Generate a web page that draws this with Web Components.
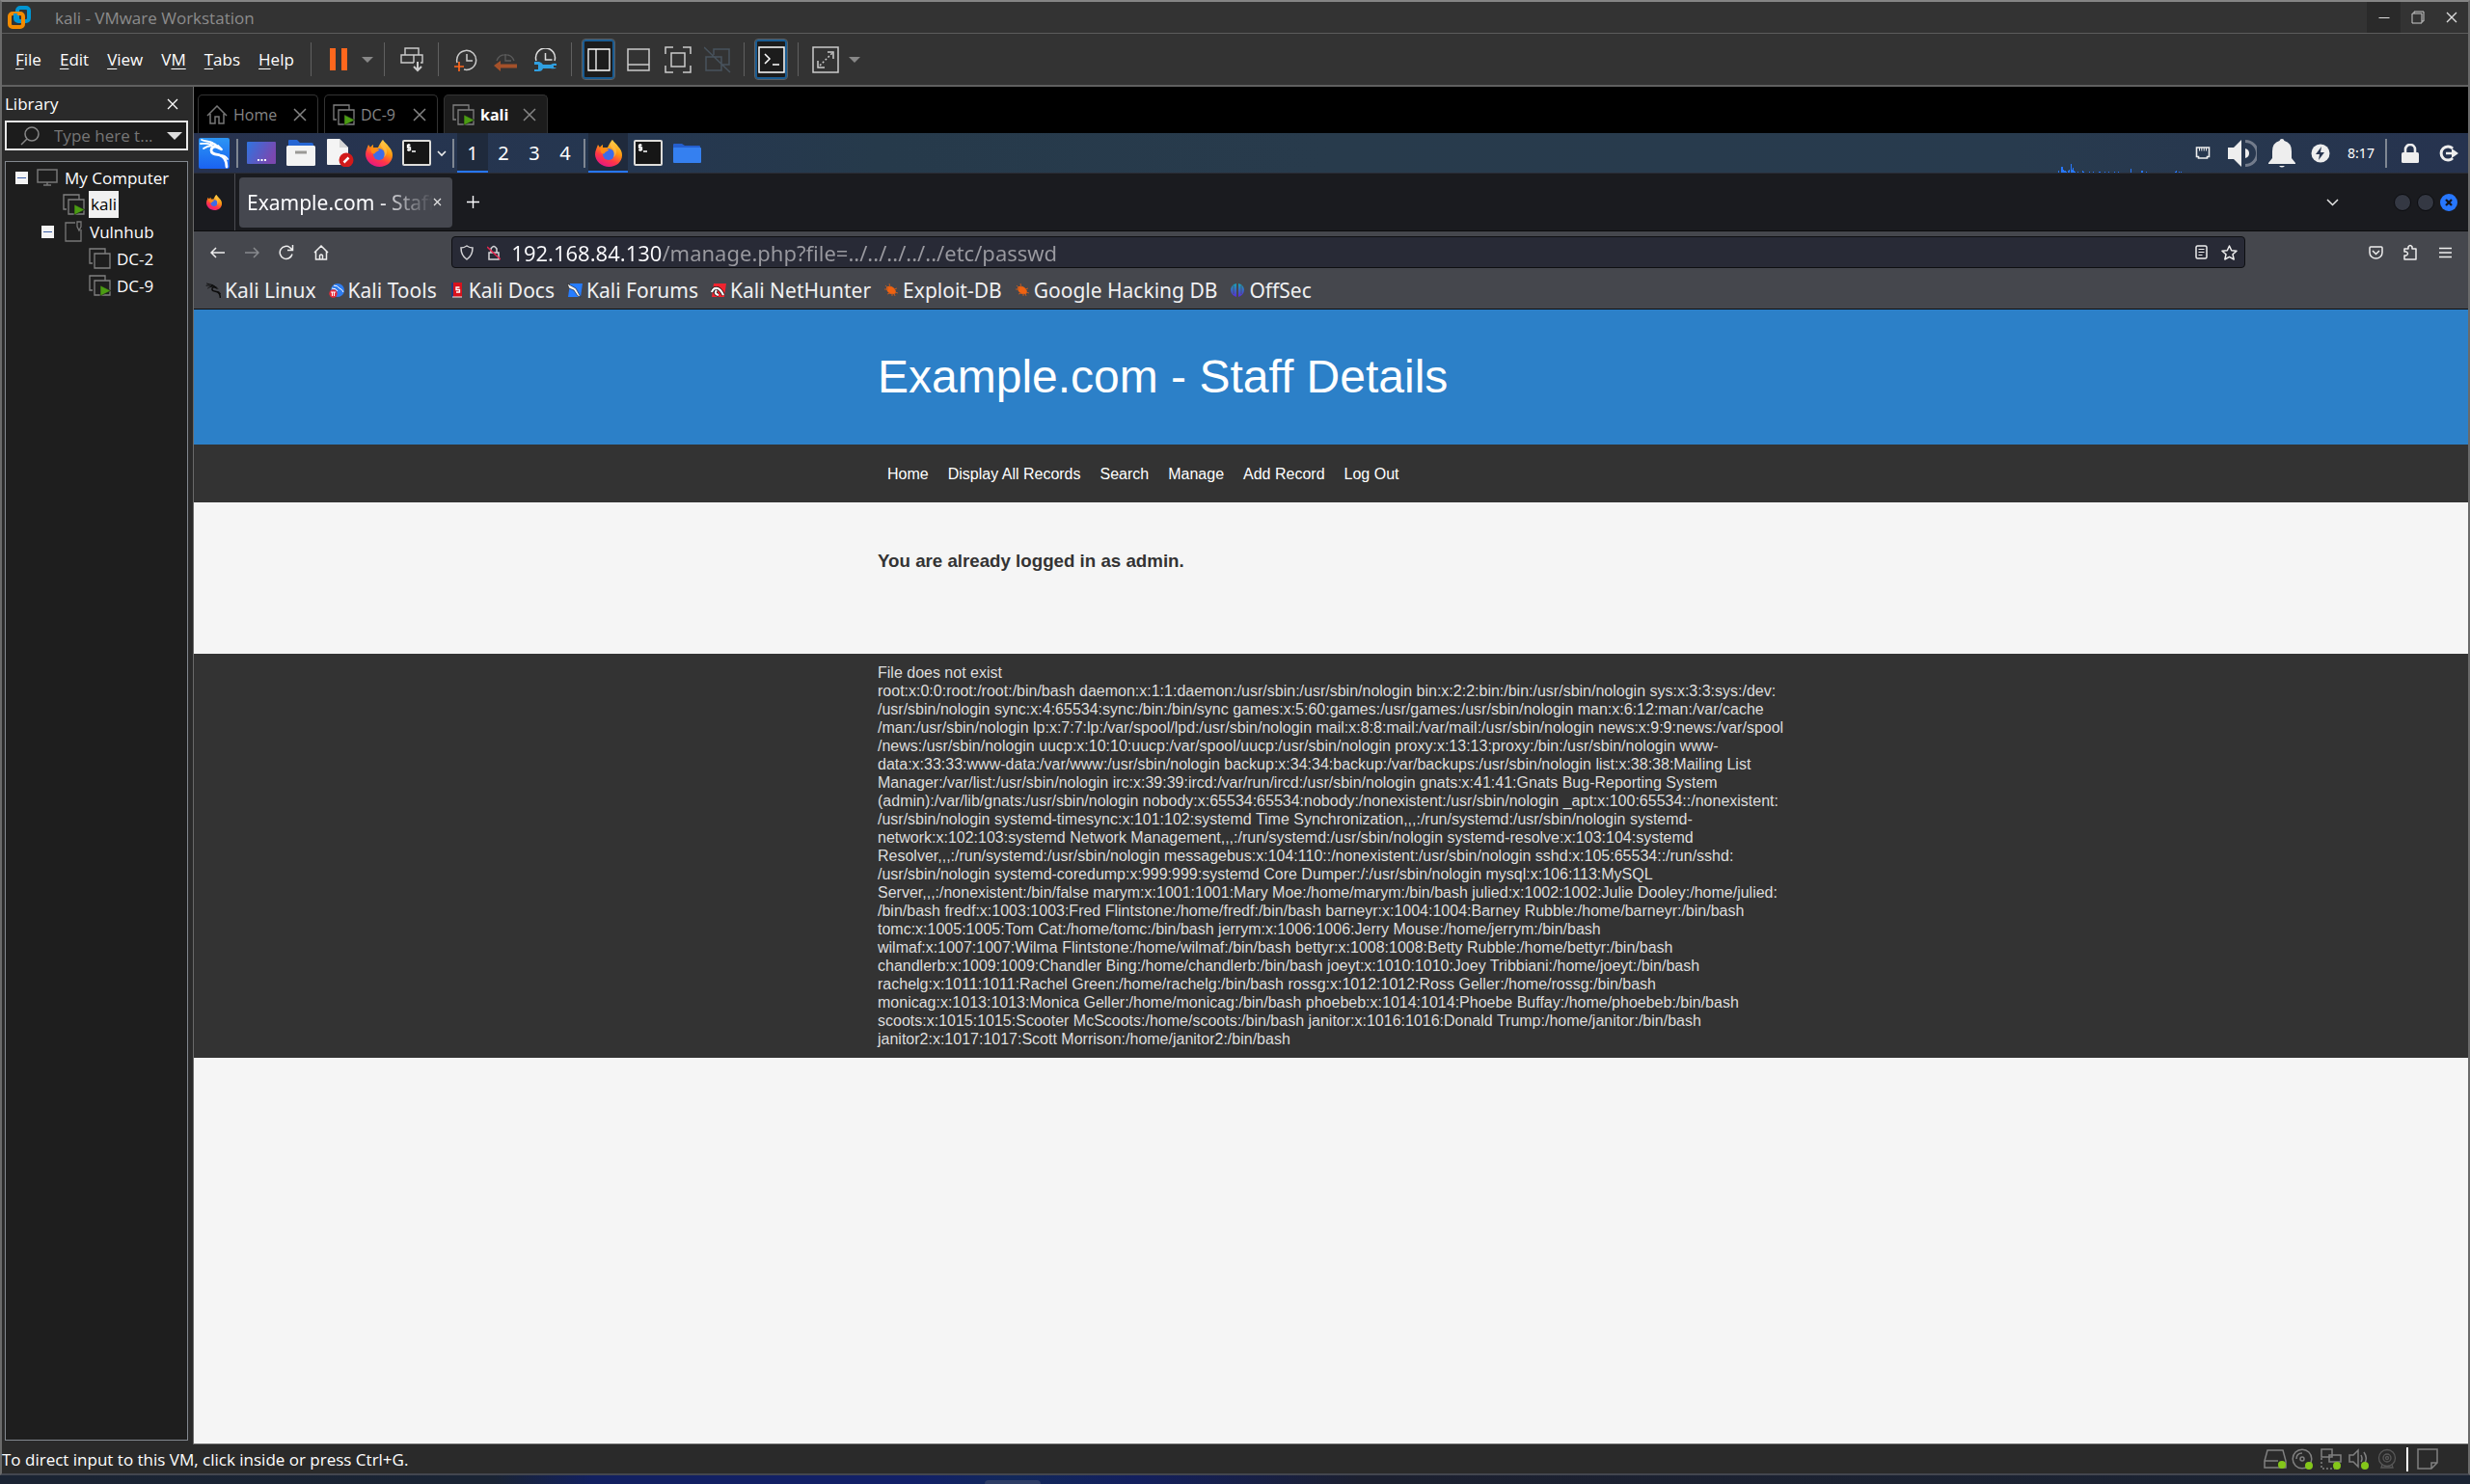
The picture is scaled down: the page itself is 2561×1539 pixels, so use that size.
<!DOCTYPE html>
<html lang="en">
<head>
<meta charset="utf-8">
<title>kali - VMware Workstation</title>
<style>
html, body { margin: 0; height: 100%; background: #2a2a2a; }
body { font-family: "Open Sans", "Noto Sans", sans-serif; font-size: 17px; color: #fff; }
</style>
</head>
<body>
<vm-window>
  <vm-titlebar slot="title">kali - VMware Workstation</vm-titlebar>
  <vm-toolbar slot="toolbar"></vm-toolbar>
  <vm-library slot="side"></vm-library>
  <vm-tabs slot="main"></vm-tabs>
  <kali-panel slot="main"></kali-panel>
  <ff-tabstrip slot="main">Example.com - Staff Details</ff-tabstrip>
  <ff-navbar slot="main"></ff-navbar>
  <ff-bookmarks slot="main"></ff-bookmarks>
  <staff-page slot="main"></staff-page>
  <vm-status slot="status">To direct input to this VM, click inside or press Ctrl+G.</vm-status>
</vm-window>

<script>
const fox = `<defs><linearGradient id="fa" x1=".8" y1="0" x2=".3" y2="1"><stop offset="0" stop-color="#ffe14d"/><stop offset=".4" stop-color="#ff980e"/><stop offset=".7" stop-color="#ff3647"/><stop offset="1" stop-color="#e31587"/></linearGradient></defs><path fill="url(#fa)" d="M18 0c2 3 4 4 6 7 3 3 4 6 4 9 0 7-6 12-13.500 12S0 22 0 15c0-4 2-7 3-10l2 3c1-2 2-2 3-3v3h5c2-4 3-6 5-8z"/><circle cx="14" cy="15" r="6" fill="#3d6be8"/><path fill="#ff8a16" d="M5 8c4-1 6 2 9 2 0 2-4 2-4 4-2 1-3 0-4-1z"/><path fill="#ffbd4f" d="M18 0c-3 4-3 6 0 9 2 3 2 6 1 9 3-2 4-6 2-10-1-2-3-4-3-8z" opacity=".7"/>`;
const dragon = c => `<g fill="none" stroke="${c}" stroke-linecap="round"><path stroke-width="1.800" d="M3 2c4 2 7 1 11 3M2 6c4 0 7-1 11 1M5 11c3-2 5-3 9-3"/><path stroke-width="2.800" d="M13 5c3 1 5 2 7 5-4-2-7 0-7 3 0 4 5 4 9 5 5 2 7 6 7 12"/><path stroke-width="1.800" d="M20 8l4 4M22 18c4 0 6 1 8 4"/></g>`;
const term = `<rect x="1" y="1" width="28" height="25" rx="1" fill="#161616" stroke="#deddda" stroke-width="2"/><path d="M8.500 5.500h-3v2.500h3v2.500h-3.500M6.900 4v8M10 12h4" fill="none" stroke="#fff" stroke-width="1.300"/>`;
const vmBox = `<path d="M17 6V1H1v15h3" /><path d="M6 6h16v15H6z"/>`;
const ICONS = {
  vmware: [24, 24, `<rect x="10" y="2" width="12" height="14" rx="3" fill="none" stroke="#0095d3" stroke-width="4"/><rect x="2" y="8" width="14" height="14" rx="3" fill="none" stroke="#f38b00" stroke-width="4"/><path d="M8 8v5a3 3 0 0 0 3 3h3" fill="none" stroke="#0095d3" stroke-width="4"/>`],
  min: [12, 12, `<path d="M.5 6.500h11" stroke="#ddd"/>`],
  restore: [14, 14, `<path d="M1 3h10v10H1zM3 3V1h10v10h-2" fill="none" stroke="#ccc"/>`],
  x: [12, 12, `<path d="M1 1l10 10M11 1L1 11" stroke="currentColor" stroke-width="1.300"/>`],
  xbig: [14, 14, `<path d="M1 1l12 12M13 1L1 13" stroke="currentColor" stroke-width="1.500"/>`],
  pause: [18, 23, `<path d="M0 0h6v23H0zM12 0h6v23h-6z" fill="#ff671d"/>`],
  caret: [12, 6, `<path d="M0 0h12L6 6z" fill="#888"/>`],
  caretw: [16, 8, `<path d="M0 0h16L8 8z" fill="#ddd"/>`],
  send: [24, 26, `<g fill="none" stroke="#ccc" stroke-width="1.400"><path d="M5 8V1h14v7M14 16H1V8h22v8h-2M14 8v8"/><path d="M18 15v9M14 20l4 4 4-4" stroke-width="2"/></g>`],
  snap: [24, 24, `<g fill="none" stroke="#ccc" stroke-width="1.500"><path d="M3 15A10 10 0 1 1 10 22M13 6v7h6"/><path d="M5 14v10M0 19h10" stroke="#ff671d" stroke-width="1.700"/></g>`],
  revert: [24, 24, `<path d="M3 13A9.500 9.500 0 0 1 21 13M12 6v7h6" fill="none" stroke="#5c5c5c" stroke-width="1.300"/><path d="M0 18l7-5v3.500h17v4H7V24z" fill="#a4512a"/>`],
  manage: [24, 24, `<path d="M3 13A10 10 0 1 1 22 13M12.500 5v7h7" fill="none" stroke="#ddd" stroke-width="1.500"/><path d="M1 14h5q3 1 4 3h8q3-2 6-1v2h-3v2h3q-2 2-6 1h-8q-1 3-4 3H1v-2h4v-5H1z" fill="#2f9fe0"/>`],
  side: [24, 24, `<path d="M1 1h22v22H1zM9 1v22" fill="none" stroke="#fff" stroke-width="1.300"/>`],
  thumb: [24, 24, `<path d="M1 1h22v22H1zM1 17h22" fill="none" stroke="#ccc" stroke-width="1.500"/>`],
  full: [28, 28, `<path d="M1 8V1h8M19 1h8v7M27 20v7h-8M9 27H1v-7M7 7h14v14H7z" fill="none" stroke="#ccc" stroke-width="1.500"/>`],
  unity: [28, 28, `<path d="M0 1l27 26M10 9V3h16v16h-7M2 11h16v14H2z" fill="none" stroke="#48535d" stroke-width="1.500"/>`],
  console: [28, 28, `<path d="M1 1h26v26H1zM7 8l5 5-5 5M15 19h7" fill="none" stroke="#fff" stroke-width="1.500"/>`],
  expand: [28, 28, `<path d="M1 1h26v26H1zM16 6h6v7M6 15v7h7" fill="none" stroke="#ccc" stroke-width="1.500"/><path d="M8 20L21 7" stroke="#ccc" stroke-width="1.500" stroke-dasharray="2 2"/>`],
  home: [22, 20, `<path d="M1 11L11 1l10 10M4 9v10h5v-7h4v7h5V9" fill="none" stroke="#777" stroke-width="1.500"/>`],
  vm: [23, 22, `<g fill="none" stroke="#808080" stroke-width="1.300">${vmBox}</g>`],
  vmrun: [23, 22, `<g fill="none" stroke="#808080" stroke-width="1.300">${vmBox}</g><path d="M12 11v11l11-5.500z" fill="#4b9c12" stroke="#1c1c1c" stroke-width=".6"/>`],
  monitor: [24, 18, `<path d="M3 1h20v13H3zM9 17h8M13 14v3" fill="none" stroke="#777" stroke-width="1.500"/>`],
  folder: [23, 22, `<path d="M15 2H5v19h16V9M17 1h4v5l-2 4-2-4z" fill="none" stroke="#777" stroke-width="1.300"/>`],
  search: [20, 20, `<g fill="none" stroke="#888" stroke-width="1.500"><circle cx="12" cy="8" r="7"/><path d="M7 13l-6 6"/></g>`],
  logo: [36, 36, `<defs><linearGradient id="kl" x2="0" y2="1"><stop stop-color="#2b95f5"/><stop offset="1" stop-color="#1a62f0"/></linearGradient></defs><rect x="2" y="2" width="32" height="32" rx="2" fill="url(#kl)"/><g transform="translate(2 2)">${dragon('#fff')}</g>`],
  desk: [30, 23, `<defs><linearGradient id="dg" x2="1" y2=".4"><stop stop-color="#2f74e0"/><stop offset="1" stop-color="#7a48b0"/></linearGradient></defs><rect width="30" height="23" rx="1" fill="url(#dg)"/><path d="M11 19h2M14.500 19h2M18 19h2" stroke="#fff" stroke-width="2"/>`],
  files: [30, 28, `<path d="M2 1q0-1 1-1h8l3 3h12q2 0 2 2v5H2z" fill="#2666d4"/><rect y="6" width="30" height="21" rx="1.500" fill="#f3f3f3"/><path d="M9 13h12" stroke="#9a9996" stroke-width="3"/>`],
  doc: [28, 29, `<path d="M0 1q0-1 1-1h12l9 9v18H1q-1 0-1-1z" fill="#f4f4f4"/><path d="M13 0v9h9z" fill="#d5d5d5"/><circle cx="20" cy="22" r="7.500" fill="#d21a1a"/><path d="M17.500 24.500l5-5" stroke="#fff" stroke-width="2.500"/>`],
  fox: [28, 28, fox],
  term: [30, 27, term],
  chev: [12, 8, `<path d="M2 2l4 4 4-4" fill="none" stroke="#eee" stroke-width="1.600"/>`],
  kfolder: [29, 20, `<path d="M0 1q0-1 1-1h8l3 2h15q1 0 1 1v3H0z" fill="#255fce"/><rect y="4" width="29" height="16" rx="1" fill="#3580f0"/>`],
  eth: [16, 13, `<path d="M1.500 1h13v9.500h-2v1.500h-9v-1.500h-2z" fill="none" stroke="#eee" stroke-width="1.600"/><path d="M4.500 1v3.500M6.800 1v3.500M9.200 1v3.500M11.500 1v3.500" stroke="#eee"/>`],
  vol: [30, 28, `<path d="M0 8h6l8-8v28l-8-8H0z" fill="#eee"/><path d="M18 9q4 1 4 5t-4 5z" fill="#eee"/><path d="M18 1.500a12.500 12.500 0 0 1 0 25" fill="none" stroke="#737c8c" stroke-width="3"/>`],
  bell: [28, 30, `<path d="M14 0q2 0 2.500 2Q24 4 24 13v7l4 5v1H0v-1l4-5v-7Q4 4 11.500 2 12 0 14 0zM11 28h6q-3 3-6 0z" fill="#eee"/>`],
  power: [20, 20, `<circle cx="10" cy="10" r="9.500" fill="#eee"/><path d="M11 3l-6 8h4l-1 6 6-8h-4z" fill="#293650"/>`],
  lock: [18, 20, `<path d="M4 9V6a5 5 0 0 1 10 0v3" fill="none" stroke="#eee" stroke-width="2.600"/><rect y="9" width="18" height="11" rx="1.500" fill="#eee"/>`],
  logout: [20, 18, `<path d="M14 4a7 7 0 1 0 0 10" fill="none" stroke="#eee" stroke-width="3"/><path d="M7 9h8" stroke="#eee" stroke-width="2.500"/><path d="M13 4l7 5-7 5z" fill="#eee"/>`],
  plus: [13, 13, `<path d="M6.500 0v13M0 6.500h13" stroke="#fbfbfe" stroke-width="1.400"/>`],
  tx: [9, 9, `<path d="M1 1l7 7M8 1L1 8" stroke="#e5e5e5" stroke-width="1.200"/>`],
  down: [13, 8, `<path d="M1 1l5.500 5.500L12 1" fill="none" stroke="#e5e5e5" stroke-width="1.500"/>`],
  dot: [18, 18, `<circle cx="9" cy="9" r="8.500" fill="#343843" stroke="#0c0d10"/>`],
  close: [18, 18, `<circle cx="9" cy="9" r="9" fill="#2777ff"/><path d="M6 6l6 6M12 6l-6 6" stroke="#14161c" stroke-width="2.300"/>`],
  back: [15, 12, `<path d="M15 6H1M6 1L1 6l5 5" fill="none" stroke="#eee" stroke-width="1.500"/>`],
  fwd: [15, 12, `<path d="M0 6h14M9 1l5 5-5 5" fill="none" stroke="#888a8e" stroke-width="1.500"/>`],
  reload: [16, 16, `<path d="M14 9.500A6.500 6.500 0 1 1 12 3l2 2M14.500 0v5.500H9" fill="none" stroke="#eee" stroke-width="1.500"/>`],
  fhome: [16, 16, `<path d="M1 8l7-7 7 7M2.500 7v8h11V7M6.500 15v-4q1.500-2 3 0v4" fill="none" stroke="#eee" stroke-width="1.500"/>`],
  shield: [14, 16, `<path d="M7 1q3 2 6 2 0 8-6 12Q1 11 1 3q3 0 6-2z" fill="none" stroke="#d5d5d8" stroke-width="1.500"/>`],
  nolock: [14, 16, `<path d="M4 8V4q3-5 6 0v4M2 8h10v7H2z" fill="none" stroke="#d5d5d8" stroke-width="1.500"/><path d="M0 2l14 13" stroke="#e22850" stroke-width="1.600"/>`],
  reader: [13, 15, `<rect x="1" y="1" width="11" height="13" rx="1.500" fill="none" stroke="#eee" stroke-width="1.500"/><path d="M3.500 4.500h6M3.500 7.500h6M3.500 10.500h4" stroke="#eee" stroke-width="1.200"/>`],
  star: [17, 16, `<path d="M8.500 1l2.200 4.700 5.300.6-4 3.500 1.200 5.200-4.700-2.700L3.800 15 5 9.800 1 6.300l5.300-.6z" fill="none" stroke="#eee" stroke-width="1.500" stroke-linejoin="round"/>`],
  pocket: [15, 14, `<path d="M1 2q0-1 1-1h11q1 0 1 1v5a6.500 6 0 0 1-13 0zM4 5l3.500 3.500L11 5" fill="none" stroke="#eee" stroke-width="1.500"/>`],
  puzzle: [14, 17, `<path d="M1 5h4V3q2-3 4 0v2h4v11H1v-4h2q3-2 0-4H1z" fill="none" stroke="#eee" stroke-width="1.500" stroke-linejoin="round"/>`],
  menu: [13, 12, `<path d="M0 1.500h13M0 6h13M0 10.500h13" stroke="#eee" stroke-width="1.500"/>`],
  bkali: [16, 16, `<g transform="scale(.53)">${dragon('#0c0c0c')}</g>`],
  btools: [16, 16, `<circle cx="9" cy="8" r="7" fill="#2f7df0"/><path d="M5 3q4 0 6 3 3 1 4 4M3 6q5 0 6 3" fill="none" stroke="#fff"/><circle cx="4.500" cy="11.500" r="4.200" fill="#e62d3a"/><path d="M2 10h5M3.500 10v4M5.500 10v4" stroke="#fff"/>`],
  bdocs: [16, 16, `<path d="M2 0h3v15H2z" fill="#243a78"/><path d="M4 0h9v15H4z" fill="#d8121c"/><path d="M10.500 5H7v2.500h3.500V10H7" fill="none" stroke="#fff" stroke-width="1.300"/><path d="M3 15h10" stroke="#eee"/>`],
  bforum: [16, 16, `<path d="M3 1h13l-2 14H1z" fill="#277dff"/><path d="M0 1l9 5 5 9-3-1-4-6-5-2z" fill="#f5f5f5" stroke="#111" stroke-width=".6"/>`],
  bhunter: [16, 16, `<path d="M3 1h13l-2 14H1z" fill="#f0242f"/><path d="M1 10c2-6 8-6 12 3M6 8q-3 4 2 5" fill="none" stroke="#111" stroke-width="3.600"/><path d="M1 10c2-6 8-6 12 3M6 8q-3 4 2 5" fill="none" stroke="#fff" stroke-width="2.200"/>`],
  bexploit: [16, 16, `<ellipse cx="8" cy="8" rx="5.500" ry="3.600" fill="#ee6211" transform="rotate(35 8 8)"/><path d="M2 3l3 3M6 1l1 4M1 7h4M4 12l3-1M9 14v-3M14 6l-3 1M15 11l-3-1M12 14l-1-3" stroke="#b85a24"/>`],
  boff: [16, 16, `<defs><linearGradient id="og" x2="0" y2="1"><stop stop-color="#18a5b8"/><stop offset="1" stop-color="#5b2bd5"/></linearGradient></defs><path d="M7 1v14Q1 13 1 7q1-5 6-6zM9 1q5 1 6 6 0 6-6 8z" fill="url(#og)"/><path d="M4 3v9M12 3v9" stroke="#45474d" stroke-width=".7"/>`],
  disk: [24, 22, `<path d="M1 20V13L4 2h16l3 11v7zM1 13h14" fill="none" stroke="#808080" stroke-width="1.500"/><circle cx="19" cy="17" r="4" fill="#84c61a"/>`],
  cd: [24, 22, `<g fill="none" stroke="#808080" stroke-width="1.500"><circle cx="11" cy="11" r="9.800"/><circle cx="11" cy="11" r="2"/><path d="M5 11q0-6 6-6"/></g><circle cx="18" cy="18" r="4" fill="#84c61a"/>`],
  net: [24, 22, `<g fill="none" stroke="#808080" stroke-width="1.500"><path d="M2 1h11v8H2zM10 7h12v7H10z"/><path d="M2 10v11h14" stroke-dasharray="2 2"/></g><circle cx="18" cy="18" r="4" fill="#84c61a"/>`],
  snd: [24, 22, `<path d="M2 7h4l5-5v17l-5-5H2zM14 7q2 4 0 7M17 4q4 6 1 11" fill="none" stroke="#808080" stroke-width="1.500"/><circle cx="18" cy="18" r="4" fill="#84c61a"/>`],
  cam: [24, 22, `<g fill="none" stroke="#585858" stroke-width="1.300"><circle cx="12" cy="10" r="8.500"/><circle cx="12" cy="10" r="4"/><circle cx="12" cy="10" r="1.500"/><path d="M7 17l-1 3h12l-1-3"/></g>`],
  note: [22, 22, `<path d="M1 1h20v14l-6 6H1zM15 21v-6h6" fill="none" stroke="#808080" stroke-width="1.500"/>`],
};
const I = n => `<ui-icon name="${n}"></ui-icon>`;

function define(name, css, html) {
  const t = document.createElement('template');
  t.innerHTML = `<style>:host,*{box-sizing:border-box}button{font:inherit;color:inherit;background:none;border:0;padding:0;margin:0;display:flex;align-items:center;justify-content:center}a{color:inherit;text-decoration:none}${css}</style>${html}`;
  customElements.define(name, class extends HTMLElement {
    constructor() {
      super();
      this.attachShadow({ mode: 'open' }).append(t.content.cloneNode(true));
    }
  });
}

customElements.define('ui-icon', class extends HTMLElement {
  constructor() { super(); this.attachShadow({ mode: 'open' }); }
  connectedCallback() {
    const [w, h, body] = ICONS[this.getAttribute('name')];
    const s = this.getAttribute('size') || w;
    this.shadowRoot.innerHTML = `<style>:host{display:inline-flex;flex:none}svg{display:block}</style><svg width="${s}" height="${s * h / w}" viewBox="0 0 ${w} ${h}" aria-hidden="true">${body}</svg>`;
  }
});

define('vm-window', `
:host{display:flex;flex-direction:column;min-height:100vh;background:#2a2a2a}
.frame{flex:1;display:flex;flex-direction:column;border:2px solid #6a6a6a;border-top-color:#858585;border-bottom-color:#43464f}
.body{flex:1;display:flex}
aside{flex:none;width:199px;display:flex;border-right:1px solid #6a6a6a}
main{flex:1;min-width:0;display:flex;flex-direction:column;border-bottom:1px solid #6a6a6a}
.desk{height:9px;display:flex;justify-content:center;background:linear-gradient(90deg,#1b2433,#1a2434 20%,#122060 24%,#122068 37%,#12285a 41%,#131f5e 46%,#1c2030 55%,#1b2433);padding-top:5px}
.desk i{width:58px;height:4px;background:#2e3d66;border-radius:4px 4px 0 0;margin-right:18%}
::slotted([slot=side]){flex:1;min-width:0}
`, `<div class="frame"><slot name="title"></slot><slot name="toolbar"></slot>
<div class="body"><aside><slot name="side"></slot></aside><main><slot name="main"></slot></main></div>
<slot name="status"></slot></div><div class="desk"><i></i></div>`);

define('vm-titlebar', `
:host{display:flex;align-items:center;height:33px;background:#333;color:#8c8c8c;border-bottom:1px solid #5c5c5c;padding-left:6px;font-size:17px}
span{flex:1;padding-left:25px}
button{width:35px;height:32px;color:#ddd}
.on{background:#2a2a2a}
`, `${I('vmware')}<span><slot></slot></span><button class="on" aria-label="Minimize">${I('min')}</button><button aria-label="Restore">${I('restore')}</button><button aria-label="Close">${I('x')}</button>`);

define('vm-toolbar', `
:host{display:flex;align-items:center;height:55px;background:#333;border-bottom:2px solid #606060;font-size:17px}
nav{width:313px;display:flex;gap:19px;padding-left:14px}
u{text-underline-offset:3px;text-decoration-thickness:1px;text-decoration-skip-ink:none}
.b{width:41px;height:41px;flex:none}
.c{width:20px;flex:none}
.s{width:15px;height:35px;flex:none;display:flex;justify-content:center}
.s::before{content:"";width:1px;background:#606060}
.on{width:33px;margin:0 4px;background:#1c1c1c;border:2px solid #1a5c92;outline:1px solid #5a5f64;border-radius:3px}
`, `<nav><button><span><u>F</u>ile</span></button><button><span><u>E</u>dit</span></button><button><span><u>V</u>iew</span></button><button><span>V<u>M</u></span></button><button><span><u>T</u>abs</span></button><button><span><u>H</u>elp</span></button></nav>
<i class="s"></i><button class="b" aria-label="Suspend">${I('pause')}</button><button class="c" aria-label="Power options">${I('caret')}</button><i class="s"></i>
<button class="b" aria-label="Send Ctrl+Alt+Del">${I('send')}</button><i class="s"></i>
<button class="b" aria-label="Take snapshot">${I('snap')}</button><button class="b" aria-label="Revert snapshot">${I('revert')}</button><button class="b" aria-label="Manage snapshots">${I('manage')}</button><i class="s"></i>
<button class="b on" aria-label="Show library">${I('side')}</button><button class="b" aria-label="Thumbnail bar">${I('thumb')}</button><button class="b" aria-label="Full screen">${I('full')}</button><button class="b" aria-label="Unity">${I('unity')}</button><i class="s"></i>
<button class="b on" aria-label="Console view">${I('console')}</button><i class="s"></i>
<button class="b" aria-label="Stretch">${I('expand')}</button><button class="c" aria-label="Stretch options">${I('caret')}</button>`);

define('vm-library', `
:host{display:flex;flex-direction:column;background:#2a2a2a;padding:0 5px 4px 3px;font-size:17px}
header{display:flex;align-items:center;justify-content:space-between;height:35px;padding:0 10px 0 0}
.q{display:flex;align-items:center;height:31px;border:2px solid #e8e8e8;background:#1c1c1c;padding:0 4px 0 14px}
input{flex:1;min-width:0;background:none;border:0;outline:0;font:inherit;padding:0 0 0 15px;color:#fff}
input::placeholder{color:#767676;opacity:1}
ul{list-style:none;margin:0;padding:0}
.tree{flex:1;margin-top:11px;border:1px solid #83888f;background:#1e1e1e;padding:2px 0 0 10px}
li>div{display:flex;align-items:center;height:28px;gap:7px}
li>ul{padding-left:27px}
li>.leaf{padding-left:22px;gap:4px}
.leaf span{padding:0 2px}
.box{width:13px;height:13px;background:#f4f4f4;flex:none}
.box::before{content:"";width:9px;height:1px;background:#3b5ea8}
b{font-weight:400;background:#f0f0f0;color:#000;padding:0 2px;line-height:28px}
`, `<header><span>Library</span><button aria-label="Close library">${I('x')}</button></header>
<div class="q">${I('search')}<input type="text" aria-label="Search library" placeholder="Type here t..."><button aria-label="Search options">${I('caretw')}</button></div>
<ul class="tree"><li><div><button class="box" aria-label="Collapse"></button>${I('monitor')}<span>My Computer</span></div>
<ul><li><div class="leaf">${I('vmrun')}<b>kali</b></div></li>
<li><div><button class="box" aria-label="Collapse"></button>${I('folder')}<span>Vulnhub</span></div>
<ul><li><div class="leaf">${I('vm')}<span>DC-2</span></div></li><li><div class="leaf">${I('vmrun')}<span>DC-9</span></div></li></ul></li></ul></li></ul>`);

define('vm-tabs', `
:host{display:flex;align-items:flex-end;gap:6px;height:48px;background:#000;padding-left:4px;font-size:16px;color:#858585}
.t{display:flex;align-items:center;height:40px;padding:0 11px 0 8px;border:1px solid #333;border-bottom:0;border-radius:5px 5px 0 0;width:118px}
.t span{flex:1;padding-left:6px}
.home{width:125px}.on{width:108px;background:#1c1c1c;color:#fff;font-weight:700}
button{color:#858585}
`, `<div class="t home">${I('home')}<span>Home</span><button aria-label="Close Home">${I('xbig')}</button></div>
<div class="t">${I('vmrun')}<span>DC-9</span><button aria-label="Close DC-9">${I('xbig')}</button></div>
<div class="t on">${I('vmrun')}<span>kali</span><button aria-label="Close kali">${I('xbig')}</button></div>`);

const bars = [6,0,0,18,18,8,4,4,3,0,4,8,0,27,9,15,4,3,0,0,3,0,0,0,0,6,3,0,0,0,0,0,3,0,0,0,3,0,0,0,0,0,3,3,0,0,0,0,3,0,0,0,3,0,0,0,0,0,3,0,0,0,3,0,0,0,0,0,0,0,0,0,0,0,0,12,0,0,0,0,0,0,0,0,0,0,6,4,0,0,0,3,0,0,0,0,0,0,0,0,0,0,0,0,0,0,0,0,0,0,0,0,0,0,0,0,0,0,0,0,0,3,6,0,0,3,0,3];
define('kali-panel', `
:host{display:flex;align-items:center;height:41px;background:linear-gradient(90deg,#27324f,#253750 20%,#263a4b 30%,#283b4c 50%,#283b4e 80%,#26334f);font-family:"Noto Sans",sans-serif;font-size:20px}
button{width:41px;height:41px;flex:none}
.w40{width:40px}.w37{width:37px}.w16{width:16px}.n{width:32px}
.s{width:8px;height:30px;flex:none;display:flex;justify-content:center}
.s::before{content:"";width:2px;background:#7f8792}
.on{background:#1f2a3c;box-shadow:inset 0 -2px #2777ff}
.gap{flex:1}
.g{display:flex;align-items:flex-end;height:41px;width:129px}
time{font-size:14px;width:44px;text-align:center}
`, `<button aria-label="Applications">${I('logo')}</button><i class="s"></i>
<button aria-label="Show desktop">${I('desk')}</button><button aria-label="Files">${I('files')}</button><button aria-label="Text editor">${I('doc')}</button><button class="w40" aria-label="Firefox">${I('fox')}</button><button class="w37" aria-label="Terminal">${I('term')}</button><button class="w16" aria-label="More terminals">${I('chev')}</button><i class="s"></i>
<button class="n on">1</button><button class="n">2</button><button class="n">3</button><button class="n">4</button><i class="s"></i>
<button class="on" aria-label="Firefox window">${I('fox')}</button><button aria-label="Terminal window">${I('term')}</button><button aria-label="Files window">${I('kfolder')}</button>
<div class="gap"></div><div class="g"><svg width="129" height="41" fill="#2777ff" aria-hidden="true">${bars.map((v, i) => v ? `<rect x="${i}" y="${41 - Math.ceil(v / 3)}" width="1" height="${Math.ceil(v / 3)}"/>` : '').join('')}</svg></div>
<button aria-label="Network">${I('eth')}</button><button aria-label="Volume">${I('vol')}</button><button aria-label="Notifications">${I('bell')}</button><button class="w40" aria-label="Power">${I('power')}</button><time>8:17</time><i class="s"></i><button aria-label="Lock">${I('lock')}</button><button class="w40" aria-label="Log out">${I('logout')}</button>`);

define('ff-tabstrip', `
:host{display:flex;align-items:center;height:61px;background:#1a1b1f;border-top:1px solid #2a2d36;border-bottom:1px solid #0c0c0d;font-family:"Noto Sans",sans-serif;font-size:21px;color:#fbfbfe}
.pin{width:43px;height:59px;border-right:1px solid #4a4b50}
.tab{display:flex;align-items:center;width:221px;height:52px;margin-left:4px;background:#45474f;border-radius:4px;padding:0 11px 0 8px}
.tab span{flex:1;min-width:0;overflow:hidden;white-space:nowrap;mask-image:linear-gradient(90deg,#000 70%,transparent)}
.new{width:42px;height:42px}
.gap{flex:1}
.list{margin-right:57px}
.w{display:flex;gap:6px;padding-right:11px}
`, `<button class="pin" aria-label="Pinned tab"><ui-icon name="fox" size="16"></ui-icon></button>
<div class="tab"><span><slot></slot></span><button aria-label="Close tab">${I('tx')}</button></div>
<button class="new" aria-label="New tab">${I('plus')}</button><div class="gap"></div>
<button class="list" aria-label="List all tabs">${I('down')}</button>
<div class="w"><button aria-label="Minimize">${I('dot')}</button><button aria-label="Maximize">${I('dot')}</button><button aria-label="Close">${I('close')}</button></div>`);

define('ff-navbar', `
:host{display:flex;align-items:center;height:43px;background:#45474d;padding:0 6px;font-family:"Noto Sans",sans-serif;font-size:22px}
:host>button{width:36px;height:36px}
.sp{width:5%;flex:none}
.url{flex:1;display:flex;align-items:center;height:33px;background:#282a36;border:1px solid #0e0f12;border-radius:4px;padding:0 7px 0 8px;gap:14px}
input{flex:1;min-width:0;border:0;outline:0;font:inherit;height:31px;padding:0;margin-left:-3px;color:#fbfbfe;-webkit-text-fill-color:transparent;background:linear-gradient(90deg,#fbfbfe 156px,#9a9aa0 156px) text}
`, `<button aria-label="Back">${I('back')}</button><button aria-label="Forward">${I('fwd')}</button><button aria-label="Reload">${I('reload')}</button><button aria-label="Home">${I('fhome')}</button><div class="sp"></div>
<div class="url">${I('shield')}${I('nolock')}<input type="text" aria-label="Address" value="192.168.84.130/manage.php?file=../../../../../etc/passwd"><button aria-label="Reader view">${I('reader')}</button><button aria-label="Bookmark">${I('star')}</button></div>
<div class="sp"></div><button aria-label="Pocket">${I('pocket')}</button><button aria-label="Extensions">${I('puzzle')}</button><button aria-label="Menu">${I('menu')}</button>`);

define('ff-bookmarks', `
:host{display:flex;align-items:center;gap:13px;height:38px;background:#45474d;border-bottom:1px solid #0e0f12;padding:0 12px 1px;font-family:"Noto Sans",sans-serif;font-size:21px;color:#f0f0f2}
a{display:flex;align-items:center;gap:4px}
`, [['bkali', 'Kali Linux'], ['btools', 'Kali Tools'], ['bdocs', 'Kali Docs'], ['bforum', 'Kali Forums'], ['bhunter', 'Kali NetHunter'], ['bexploit', 'Exploit-DB'], ['bexploit', 'Google Hacking DB'], ['boff', 'OffSec']].map(([i, t]) => `<a href="#">${I(i)}<span>${t}</span></a>`).join(''));

define('staff-page', `
:host{flex:1;display:block;background:#f5f5f5;font-family:"Liberation Sans",Arial,sans-serif;font-size:16px;line-height:19px;color:#333}
.wrap{width:940px;max-width:100%;margin:0 auto}
header{background:#2c80c8;color:#fff;height:140px;padding-top:42px}
h1{font-size:48px;line-height:56px;font-weight:400;margin:0}
nav{background:#333;color:#fff;height:60px;display:flex;align-items:center}
nav .wrap{display:flex;gap:20px;padding-left:10px}
section{height:157px;padding-top:50px}
h3{line-height:22px;margin:0}
footer{background:#333;color:#ddd;padding:10px 0}
p{margin:0;white-space:nowrap}
`, `<header><div class="wrap"><h1>Example.com - Staff Details</h1></div></header>
<nav><div class="wrap"><a href="#">Home</a><a href="#">Display All Records</a><a href="#">Search</a><a href="#">Manage</a><a href="#">Add Record</a><a href="#">Log Out</a></div></nav>
<section><div class="wrap"><h3>You are already logged in as admin.</h3></div></section>
<footer><div class="wrap"><p>File does not exist<br>
root:x:0:0:root:/root:/bin/bash daemon:x:1:1:daemon:/usr/sbin:/usr/sbin/nologin bin:x:2:2:bin:/bin:/usr/sbin/nologin sys:x:3:3:sys:/dev:<br>
/usr/sbin/nologin sync:x:4:65534:sync:/bin:/bin/sync games:x:5:60:games:/usr/games:/usr/sbin/nologin man:x:6:12:man:/var/cache<br>
/man:/usr/sbin/nologin lp:x:7:7:lp:/var/spool/lpd:/usr/sbin/nologin mail:x:8:8:mail:/var/mail:/usr/sbin/nologin news:x:9:9:news:/var/spool<br>
/news:/usr/sbin/nologin uucp:x:10:10:uucp:/var/spool/uucp:/usr/sbin/nologin proxy:x:13:13:proxy:/bin:/usr/sbin/nologin www-<br>
data:x:33:33:www-data:/var/www:/usr/sbin/nologin backup:x:34:34:backup:/var/backups:/usr/sbin/nologin list:x:38:38:Mailing List<br>
Manager:/var/list:/usr/sbin/nologin irc:x:39:39:ircd:/var/run/ircd:/usr/sbin/nologin gnats:x:41:41:Gnats Bug-Reporting System<br>
(admin):/var/lib/gnats:/usr/sbin/nologin nobody:x:65534:65534:nobody:/nonexistent:/usr/sbin/nologin _apt:x:100:65534::/nonexistent:<br>
/usr/sbin/nologin systemd-timesync:x:101:102:systemd Time Synchronization,,,:/run/systemd:/usr/sbin/nologin systemd-<br>
network:x:102:103:systemd Network Management,,,:/run/systemd:/usr/sbin/nologin systemd-resolve:x:103:104:systemd<br>
Resolver,,,:/run/systemd:/usr/sbin/nologin messagebus:x:104:110::/nonexistent:/usr/sbin/nologin sshd:x:105:65534::/run/sshd:<br>
/usr/sbin/nologin systemd-coredump:x:999:999:systemd Core Dumper:/:/usr/sbin/nologin mysql:x:106:113:MySQL<br>
Server,,,:/nonexistent:/bin/false marym:x:1001:1001:Mary Moe:/home/marym:/bin/bash julied:x:1002:1002:Julie Dooley:/home/julied:<br>
/bin/bash fredf:x:1003:1003:Fred Flintstone:/home/fredf:/bin/bash barneyr:x:1004:1004:Barney Rubble:/home/barneyr:/bin/bash<br>
tomc:x:1005:1005:Tom Cat:/home/tomc:/bin/bash jerrym:x:1006:1006:Jerry Mouse:/home/jerrym:/bin/bash<br>
wilmaf:x:1007:1007:Wilma Flintstone:/home/wilmaf:/bin/bash bettyr:x:1008:1008:Betty Rubble:/home/bettyr:/bin/bash<br>
chandlerb:x:1009:1009:Chandler Bing:/home/chandlerb:/bin/bash joeyt:x:1010:1010:Joey Tribbiani:/home/joeyt:/bin/bash<br>
rachelg:x:1011:1011:Rachel Green:/home/rachelg:/bin/bash rossg:x:1012:1012:Ross Geller:/home/rossg:/bin/bash<br>
monicag:x:1013:1013:Monica Geller:/home/monicag:/bin/bash phoebeb:x:1014:1014:Phoebe Buffay:/home/phoebeb:/bin/bash<br>
scoots:x:1015:1015:Scooter McScoots:/home/scoots:/bin/bash janitor:x:1016:1016:Donald Trump:/home/janitor:/bin/bash<br>
janitor2:x:1017:1017:Scott Morrison:/home/janitor2:/bin/bash</p></div></footer>`);

define('vm-status', `
:host{display:flex;align-items:center;height:30px;background:#2a2a2a;font-size:17px}
span{flex:1}
button{width:29px;height:29px}
.s{width:13px;height:25px;display:flex;justify-content:center}
.s::before{content:"";width:2px;background:#fff}
.n{margin-right:28px}
`, `<span><slot></slot></span>${[['disk', 'Hard disk'], ['cd', 'CD/DVD'], ['net', 'Network adapter'], ['snd', 'Sound'], ['cam', 'Camera']].map(([i, l]) => `<button aria-label="${l}">${I(i)}</button>`).join('')}<i class="s"></i><button class="n" aria-label="Messages">${I('note')}</button>`);
</script>
</body>
</html>
